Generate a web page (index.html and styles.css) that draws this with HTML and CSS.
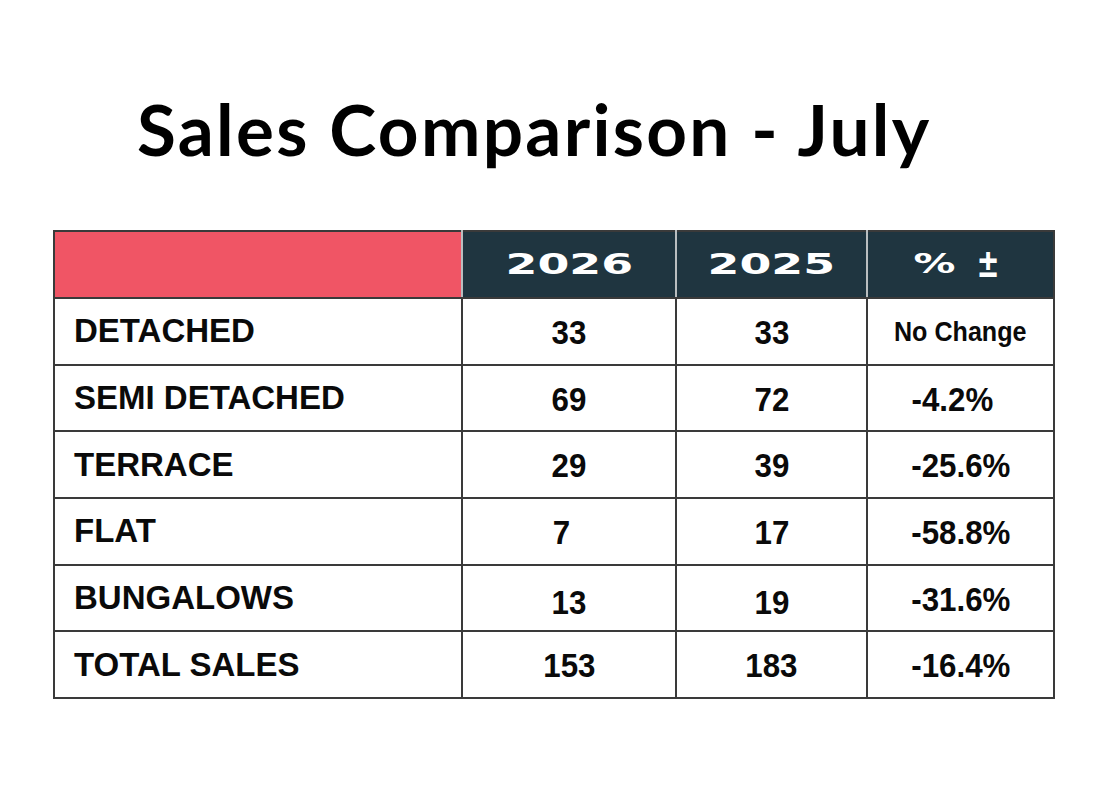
FILE: index.html
```html
<!DOCTYPE html>
<html lang="en">
<head>
<meta charset="utf-8">
<title>Sales Comparison - July</title>
<link rel="stylesheet" href="styles.css">
</head>
<body>
<main class="page">
  <h1 class="title">Sales Comparison - July</h1>
  <table class="sales">
    <colgroup>
      <col class="c-label"><col class="c-y1"><col class="c-y2"><col class="c-pct">
    </colgroup>
    <thead>
      <tr>
        <th class="h-blank"></th>
        <th class="h-dark"><span class="wide">2026</span></th>
        <th class="h-dark"><span class="wide">2025</span></th>
        <th class="h-dark"><span class="pm-wrap"><span class="wide pct">%</span><span class="pm">±</span></span></th>
      </tr>
    </thead>
    <tbody>
      <tr><td class="label">DETACHED</td><td class="num"><span>33</span></td><td class="num"><span>33</span></td><td class="num"><span class="small">No Change</span></td></tr>
      <tr><td class="label">SEMI DETACHED</td><td class="num"><span>69</span></td><td class="num"><span>72</span></td><td class="num"><span class="shift-l">-4.2%</span></td></tr>
      <tr><td class="label">TERRACE</td><td class="num"><span>29</span></td><td class="num"><span>39</span></td><td class="num"><span>-25.6%</span></td></tr>
      <tr><td class="label">FLAT</td><td class="num"><span class="shift-l">7</span></td><td class="num"><span>17</span></td><td class="num"><span>-58.8%</span></td></tr>
      <tr><td class="label">BUNGALOWS</td><td class="num"><span class="low">13</span></td><td class="num"><span class="low">19</span></td><td class="num"><span>-31.6%</span></td></tr>
      <tr><td class="label">TOTAL SALES</td><td class="num"><span>153</span></td><td class="num"><span>183</span></td><td class="num"><span>-16.4%</span></td></tr>
    </tbody>
  </table>
</main>
</body>
</html>
```

FILE: styles.css
```css
html, body {
  margin: 0;
  padding: 0;
  background: #ffffff;
}

.page {
  width: 1100px;
  height: 800px;
  padding-top: 1px;
  box-sizing: border-box;
}

.title {
  margin: 85px 0 0 137px;
  font-family: "Lato", "Liberation Sans", sans-serif;
  font-weight: 700;
  font-size: 71px;
  line-height: 86px;
  color: #000000;
  letter-spacing: 2.3px;
  height: 86px;
}

.sales {
  margin: 58px 0 0 53px;
  width: 1000px;
  border-collapse: collapse;
  table-layout: fixed;
  font-family: "Liberation Sans", Arial, sans-serif;
  color: #0a0a0a;
}

.c-label { width: 408px; }
.c-y1 { width: 214px; }
.c-y2 { width: 191px; }
.c-pct { width: 187px; }

.sales th,
.sales td {
  border: 2px solid #3a3a3a;
  padding: 0;
}

.sales thead tr { height: 67px; }
.sales tbody tr { height: 66.7px; }

.h-blank {
  background: #f05565;
  border-right: 2px solid #b9bec0 !important;
}

.h-dark {
  background: #1f3540;
  color: #ffffff;
  text-align: center;
  border-left: 2px solid #b9bec0 !important;
  border-right: 2px solid #b9bec0 !important;
}

.h-dark:last-child {
  border-right: 2px solid #3a3a3a !important;
}

.wide {
  display: inline-block;
  font-family: "DejaVu Sans", "Liberation Sans", sans-serif;
  font-weight: 700;
  font-size: 29px;
  line-height: 32px;
  letter-spacing: 0;
  transform: scaleX(1.58);
  position: relative;
  top: -1px;
}

.pm-wrap {
  display: inline-flex;
  align-items: center;
  gap: 18px;
  position: relative;
  left: -6px;
}

.wide.pct {
  font-size: 27px;
  transform: scaleX(1.55);
  margin: 0 11px;
}

.pm {
  display: inline-block;
  font-family: "Liberation Sans", Arial, sans-serif;
  font-weight: 700;
  font-size: 40px;
  line-height: 32px;
  transform: scaleX(0.85);
  position: relative;
  top: -2px;
}

.label {
  padding-left: 19px !important;
  font-weight: 700;
  font-size: 33px;
  text-align: left;
}

.num {
  text-align: center;
}

.num span {
  display: inline-block;
  font-weight: 700;
  font-size: 34px;
  transform: scaleX(0.92);
  position: relative;
  top: 1px;
}

.num span.small {
  font-size: 27px;
  transform: scaleX(0.93);
}

.num span.shift-l {
  left: -8px;
}

.num span.low {
  top: 4px;
}
```
